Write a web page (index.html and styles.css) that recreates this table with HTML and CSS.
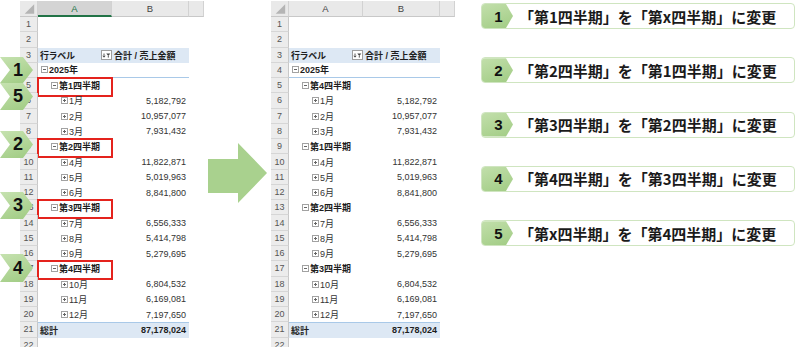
FILE: index.html
```html
<!DOCTYPE html>
<html lang="ja">
<head>
<meta charset="utf-8">
<title>ピボットテーブル 四半期の並べ替え</title>
<link rel="stylesheet" href="styles.css">
</head>
<body>
<div class="page">
  <div class="sheet sheet-left">
    <div class="row head">
      <div class="corner"><svg width="18" height="15" viewBox="0 0 18 15"><polygon points="15,3 15,13 5,13" fill="#b4b4b4"/></svg></div>
      <div class="col sel">A</div><div class="col">B</div><div class="col"></div>
    </div>
    <div class="row"><div class="rn">1</div><div class="cell a"></div><div class="cell b"></div><div class="cell c"></div></div>
    <div class="row"><div class="rn">2</div><div class="cell a"></div><div class="cell b"></div><div class="cell c"></div></div>
    <div class="row lab"><div class="rn">3</div><div class="cell a bold">行ラベル<span class="filter"><svg width="11" height="10" viewBox="0 0 11 10"><rect x="0.5" y="0.5" width="10" height="9" fill="#fff" stroke="#9e9e9e"/><path d="M3 3.5v3.5M1.8 5.8L3 7.2 4.2 5.8" stroke="#444" fill="none" stroke-width="0.9"/><path d="M5.3 3.5h4l-2 2.5z" fill="#444"/><path d="M7.3 6v1.6" stroke="#444" stroke-width="0.9"/></svg></span></div><div class="cell b left bold">合計 / 売上金額</div><div class="cell c"></div></div>
    <div class="row yr"><div class="rn">4</div><div class="cell a bold"><span class="tg minus"></span>2025年</div><div class="cell b"></div><div class="cell c"></div></div>
    <div class="row"><div class="rn">5</div><div class="cell a bold l1"><span class="tg minus"></span>第1四半期</div><div class="cell b"></div><div class="cell c"></div><span class="mark"></span></div>
    <div class="row"><div class="rn">6</div><div class="cell a l2"><span class="tg plus"></span>1月</div><div class="cell b">5,182,792</div><div class="cell c"></div></div>
    <div class="row"><div class="rn">7</div><div class="cell a l2"><span class="tg plus"></span>2月</div><div class="cell b">10,957,077</div><div class="cell c"></div></div>
    <div class="row"><div class="rn">8</div><div class="cell a l2"><span class="tg plus"></span>3月</div><div class="cell b">7,931,432</div><div class="cell c"></div></div>
    <div class="row"><div class="rn">9</div><div class="cell a bold l1"><span class="tg minus"></span>第2四半期</div><div class="cell b"></div><div class="cell c"></div><span class="mark"></span></div>
    <div class="row"><div class="rn">10</div><div class="cell a l2"><span class="tg plus"></span>4月</div><div class="cell b">11,822,871</div><div class="cell c"></div></div>
    <div class="row"><div class="rn">11</div><div class="cell a l2"><span class="tg plus"></span>5月</div><div class="cell b">5,019,963</div><div class="cell c"></div></div>
    <div class="row"><div class="rn">12</div><div class="cell a l2"><span class="tg plus"></span>6月</div><div class="cell b">8,841,800</div><div class="cell c"></div></div>
    <div class="row"><div class="rn">13</div><div class="cell a bold l1"><span class="tg minus"></span>第3四半期</div><div class="cell b"></div><div class="cell c"></div><span class="mark"></span></div>
    <div class="row"><div class="rn">14</div><div class="cell a l2"><span class="tg plus"></span>7月</div><div class="cell b">6,556,333</div><div class="cell c"></div></div>
    <div class="row"><div class="rn">15</div><div class="cell a l2"><span class="tg plus"></span>8月</div><div class="cell b">5,414,798</div><div class="cell c"></div></div>
    <div class="row"><div class="rn">16</div><div class="cell a l2"><span class="tg plus"></span>9月</div><div class="cell b">5,279,695</div><div class="cell c"></div></div>
    <div class="row"><div class="rn">17</div><div class="cell a bold l1"><span class="tg minus"></span>第4四半期</div><div class="cell b"></div><div class="cell c"></div><span class="mark"></span></div>
    <div class="row"><div class="rn">18</div><div class="cell a l2"><span class="tg plus"></span>10月</div><div class="cell b">6,804,532</div><div class="cell c"></div></div>
    <div class="row"><div class="rn">19</div><div class="cell a l2"><span class="tg plus"></span>11月</div><div class="cell b">6,169,081</div><div class="cell c"></div></div>
    <div class="row"><div class="rn">20</div><div class="cell a l2"><span class="tg plus"></span>12月</div><div class="cell b">7,197,650</div><div class="cell c"></div></div>
    <div class="row tot"><div class="rn">21</div><div class="cell a bold">総計</div><div class="cell b bold">87,178,024</div><div class="cell c"></div></div>
    <div class="row"><div class="rn">22</div><div class="cell a"></div><div class="cell b"></div><div class="cell c"></div></div>
  </div>

  <div class="arrow"><svg width="59" height="60" viewBox="0 0 59 60"><polygon points="0,16 30,16 30,0 59,30 30,60 30,50 0,50" fill="#a9d18e"/></svg></div>

  <div class="sheet sheet-right">
    <div class="row head">
      <div class="corner"><svg width="18" height="15" viewBox="0 0 18 15"><polygon points="15,3 15,13 5,13" fill="#b4b4b4"/></svg></div>
      <div class="col">A</div><div class="col">B</div><div class="col"></div>
    </div>
    <div class="row"><div class="rn">1</div><div class="cell a"></div><div class="cell b"></div><div class="cell c"></div></div>
    <div class="row"><div class="rn">2</div><div class="cell a"></div><div class="cell b"></div><div class="cell c"></div></div>
    <div class="row lab"><div class="rn">3</div><div class="cell a bold">行ラベル<span class="filter"><svg width="11" height="10" viewBox="0 0 11 10"><rect x="0.5" y="0.5" width="10" height="9" fill="#fff" stroke="#9e9e9e"/><path d="M3 3.5v3.5M1.8 5.8L3 7.2 4.2 5.8" stroke="#444" fill="none" stroke-width="0.9"/><path d="M5.3 3.5h4l-2 2.5z" fill="#444"/><path d="M7.3 6v1.6" stroke="#444" stroke-width="0.9"/></svg></span></div><div class="cell b left bold">合計 / 売上金額</div><div class="cell c"></div></div>
    <div class="row yr"><div class="rn">4</div><div class="cell a bold"><span class="tg minus"></span>2025年</div><div class="cell b"></div><div class="cell c"></div></div>
    <div class="row"><div class="rn">5</div><div class="cell a bold l1"><span class="tg minus"></span>第4四半期</div><div class="cell b"></div><div class="cell c"></div></div>
    <div class="row"><div class="rn">6</div><div class="cell a l2"><span class="tg plus"></span>1月</div><div class="cell b">5,182,792</div><div class="cell c"></div></div>
    <div class="row"><div class="rn">7</div><div class="cell a l2"><span class="tg plus"></span>2月</div><div class="cell b">10,957,077</div><div class="cell c"></div></div>
    <div class="row"><div class="rn">8</div><div class="cell a l2"><span class="tg plus"></span>3月</div><div class="cell b">7,931,432</div><div class="cell c"></div></div>
    <div class="row"><div class="rn">9</div><div class="cell a bold l1"><span class="tg minus"></span>第1四半期</div><div class="cell b"></div><div class="cell c"></div></div>
    <div class="row"><div class="rn">10</div><div class="cell a l2"><span class="tg plus"></span>4月</div><div class="cell b">11,822,871</div><div class="cell c"></div></div>
    <div class="row"><div class="rn">11</div><div class="cell a l2"><span class="tg plus"></span>5月</div><div class="cell b">5,019,963</div><div class="cell c"></div></div>
    <div class="row"><div class="rn">12</div><div class="cell a l2"><span class="tg plus"></span>6月</div><div class="cell b">8,841,800</div><div class="cell c"></div></div>
    <div class="row"><div class="rn">13</div><div class="cell a bold l1"><span class="tg minus"></span>第2四半期</div><div class="cell b"></div><div class="cell c"></div></div>
    <div class="row"><div class="rn">14</div><div class="cell a l2"><span class="tg plus"></span>7月</div><div class="cell b">6,556,333</div><div class="cell c"></div></div>
    <div class="row"><div class="rn">15</div><div class="cell a l2"><span class="tg plus"></span>8月</div><div class="cell b">5,414,798</div><div class="cell c"></div></div>
    <div class="row"><div class="rn">16</div><div class="cell a l2"><span class="tg plus"></span>9月</div><div class="cell b">5,279,695</div><div class="cell c"></div></div>
    <div class="row"><div class="rn">17</div><div class="cell a bold l1"><span class="tg minus"></span>第3四半期</div><div class="cell b"></div><div class="cell c"></div></div>
    <div class="row"><div class="rn">18</div><div class="cell a l2"><span class="tg plus"></span>10月</div><div class="cell b">6,804,532</div><div class="cell c"></div></div>
    <div class="row"><div class="rn">19</div><div class="cell a l2"><span class="tg plus"></span>11月</div><div class="cell b">6,169,081</div><div class="cell c"></div></div>
    <div class="row"><div class="rn">20</div><div class="cell a l2"><span class="tg plus"></span>12月</div><div class="cell b">7,197,650</div><div class="cell c"></div></div>
    <div class="row tot"><div class="rn">21</div><div class="cell a bold">総計</div><div class="cell b bold">87,178,024</div><div class="cell c"></div></div>
    <div class="row"><div class="rn">22</div><div class="cell a"></div><div class="cell b"></div><div class="cell c"></div></div>
  </div>

  <div class="steps">
    <div class="step"><span class="step-no">1</span><span class="step-text">「第1四半期」を「第x四半期」に変更</span></div>
    <div class="step"><span class="step-no">2</span><span class="step-text">「第2四半期」を「第1四半期」に変更</span></div>
    <div class="step"><span class="step-no">3</span><span class="step-text">「第3四半期」を「第2四半期」に変更</span></div>
    <div class="step"><span class="step-no">4</span><span class="step-text">「第4四半期」を「第3四半期」に変更</span></div>
    <div class="step"><span class="step-no">5</span><span class="step-text">「第x四半期」を「第4四半期」に変更</span></div>
  </div>

  <span class="badge b1">1</span>
  <span class="badge b5">5</span>
  <span class="badge b2">2</span>
  <span class="badge b3">3</span>
  <span class="badge b4">4</span>
</div>
</body>
</html>
```

FILE: styles.css
```css
* { box-sizing: border-box; margin: 0; padding: 0; }
html, body { width: 800px; height: 347px; overflow: hidden; background: #fff; }
body { font-family: "Liberation Sans", "Noto Sans CJK JP", sans-serif; color: #222; }

.page { position: relative; display: flex; align-items: flex-start; height: 347px; }

/* spreadsheet */
.sheet { position: relative; width: 184px; margin-top: 1px; font-size: 9px; font-feature-settings: "palt"; }
.sheet-left { margin-left: 20px; }
.sheet-right { margin-left: 4px; }

.row { position: relative; display: grid; grid-template-columns: 18px 74px 77px 15px; height: 15.28px; }
.row.head { height: 16px; }

.head > div { background: #e9e9e9; border-right: 1px solid #d2d2d2; border-bottom: 1px solid #c8c8c8; display: flex; align-items: center; justify-content: center; color: #444; font-size: 9.5px; }
.head .corner { align-items: stretch; justify-content: stretch; }
.head .corner svg { display: block; }
.head .sel { background: #d4d4d4; color: #217346; border-bottom: 2px solid #217346; }

.rn { background: #ececec; border-right: 1px solid #c8c8c8; border-bottom: 1px solid #d6d6d6; color: #555; display: flex; align-items: center; justify-content: center; font-size: 9px; }

.cell { display: flex; align-items: center; white-space: nowrap; color: #333; }
.cell.a { padding-left: 2px; }
.cell.b { justify-content: flex-end; padding-right: 3px; }
.cell.b.left { justify-content: flex-start; padding-left: 2px; padding-right: 0; }
.bold { font-weight: bold; color: #1e1e1e; }
.l1 { padding-left: 12px !important; }
.l2 { padding-left: 22px !important; }

.lab .a, .lab .b { background: #dde8f4; }
.lab .a { justify-content: space-between; padding-right: 0; }
.filter { display: flex; align-items: center; }
.filter svg { display: block; }
.yr .a, .yr .b { border-bottom: 1px solid #a9c9e8; }
.tot .a, .tot .b { background: #dde8f4; border-top: 1px solid #a9c9e8; }

/* expand / collapse toggles */
.tg { position: relative; display: inline-block; width: 7px; height: 7px; border: 1px solid #a2a2a2; margin-right: 1px; margin-left: 1px; flex: none; }
.tg::before { content: ""; position: absolute; left: 1px; top: 2px; width: 3px; height: 1px; background: #666; }
.tg.plus::after { content: ""; position: absolute; left: 2px; top: 1px; width: 1px; height: 3px; background: #666; }

/* red highlight boxes */
.mark { position: absolute; left: 17px; top: -1px; width: 76px; height: 20px; border: 2px solid #e4231d; pointer-events: none; }

/* big arrow */
.arrow { margin-left: 4px; margin-top: 143px; }
.arrow svg { display: block; }

/* numbered chevrons on the left */
.badge { position: absolute; left: 0; width: 33px; height: 27px; display: flex; align-items: center; justify-content: center; padding-left: 3px; font-size: 18px; font-weight: bold; color: #111; background: linear-gradient(160deg, #c6e2b0, #9fcb82); clip-path: polygon(0 0, 23px 0, 33px 50%, 23px 100%, 0 100%, 10px 50%); }
.b1 { top: 57px; height: 26px; }
.b5 { top: 83px; }
.b2 { top: 131px; }
.b3 { top: 192px; }
.b4 { top: 254px; height: 28px; }

/* step list */
.steps { margin-left: 26px; margin-top: 3px; display: flex; flex-direction: column; gap: 28.3px; }
.step { width: 314px; height: 26px; border: 1px solid #cfe5c0; border-radius: 4px; display: flex; align-items: center; overflow: hidden; }
.step-no { width: 31px; height: 100%; flex: none; display: flex; align-items: center; justify-content: center; padding-left: 2px; font-size: 15px; font-weight: bold; color: #111; background: linear-gradient(160deg, #c2dfab, #a1cc84); clip-path: polygon(0 0, 24px 0, 31px 50%, 24px 100%, 0 100%); }
.step-text { margin-left: 6px; font-family: "Noto Sans CJK JP", sans-serif; font-size: 15px; font-weight: bold; color: #1a1a1a; white-space: nowrap; }
```
